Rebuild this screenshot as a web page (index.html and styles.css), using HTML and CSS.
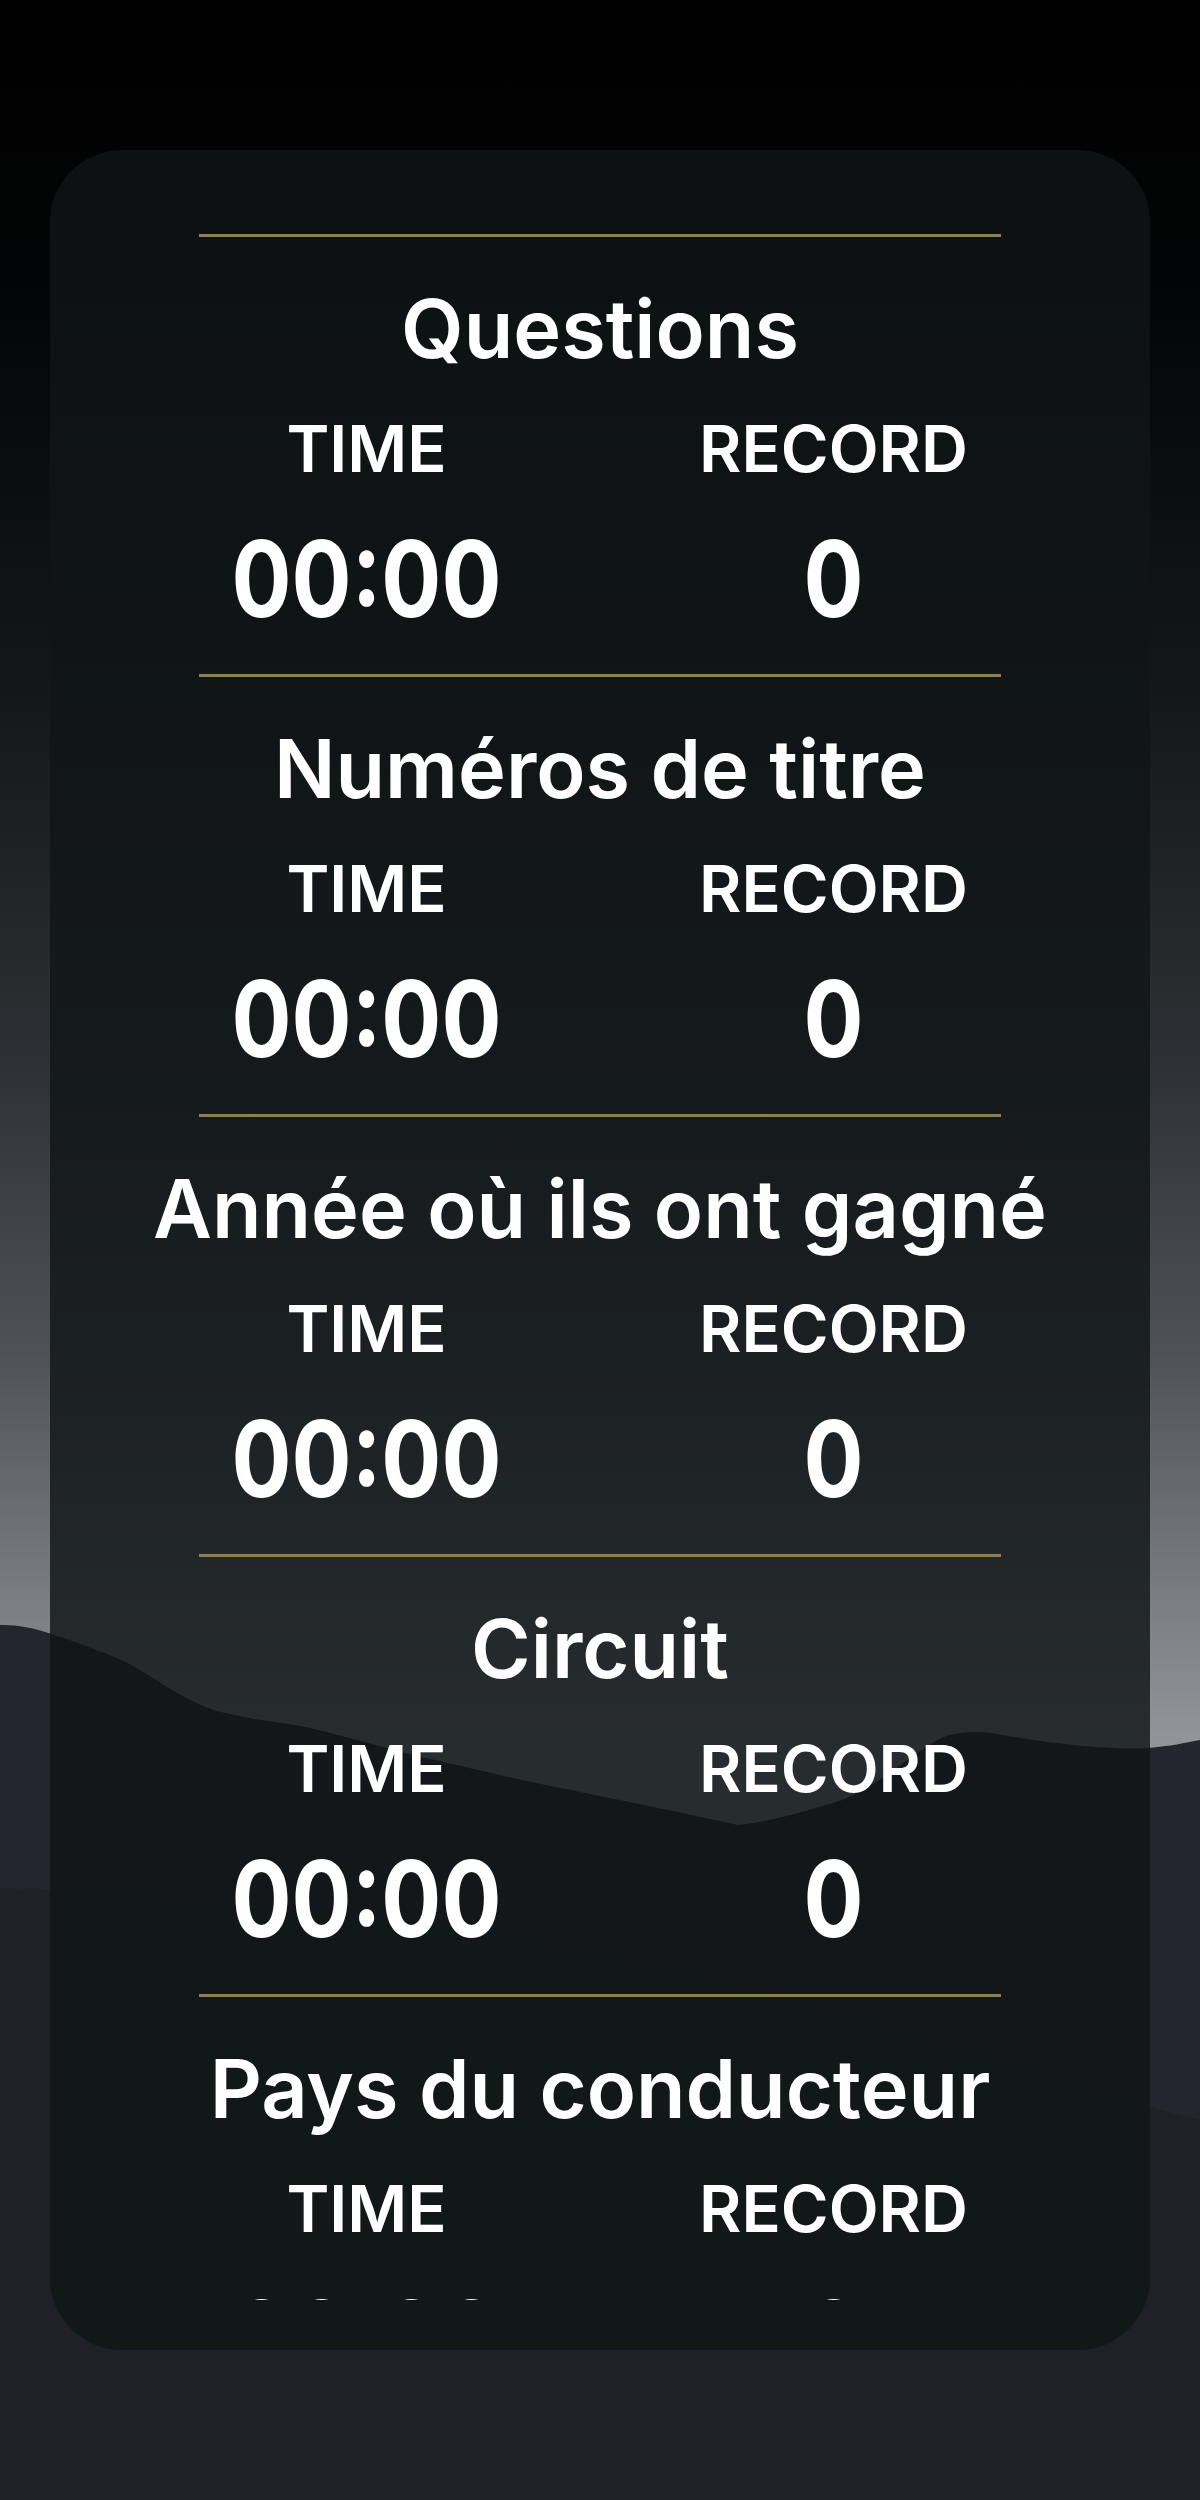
FILE: index.html
```html
<!DOCTYPE html>
<html lang="fr">
<head>
    <meta charset="UTF-8">
    <title>Records</title>
    <link rel="stylesheet" href="styles.css">
</head>
<body>
    <!-- décor: collines en arrière-plan -->
    <svg class="hills" viewBox="0 0 1200 2500" preserveAspectRatio="none">
        <path fill="#24262d" d="M0 1625 C 30 1624, 60 1636, 115 1657 C 150 1672, 170 1694, 214 1710 C 250 1720, 280 1722, 306 1727 C 360 1740, 400 1752, 421 1757 C 480 1770, 520 1780, 536 1783 C 600 1796, 680 1812, 738 1825 C 770 1822, 810 1810, 842 1800 C 890 1780, 920 1745, 949 1735 C 970 1730, 990 1732, 1002 1735 C 1060 1745, 1110 1750, 1148 1748 C 1170 1746, 1185 1743, 1200 1740 L 1200 2500 L 0 2500 Z"/>
        <path fill="#1f2126" d="M0 1888 C 200 1895, 420 1920, 640 1965 C 860 2010, 1040 2080, 1200 2120 L 1200 2500 L 0 2500 Z"/>
    </svg>

    <main class="card">
        <div class="scroller">
            <section class="block">
                <div class="rule"></div>
                <h2>Questions</h2>
                <div class="stats">
                    <span class="label">TIME</span>
                    <span class="label">RECORD</span>
                    <span class="value">00:00</span>
                    <span class="value">0</span>
                </div>
            </section>
            <section class="block">
                <div class="rule"></div>
                <h2>Numéros de titre</h2>
                <div class="stats">
                    <span class="label">TIME</span>
                    <span class="label">RECORD</span>
                    <span class="value">00:00</span>
                    <span class="value">0</span>
                </div>
            </section>
            <section class="block">
                <div class="rule"></div>
                <h2>Année où ils ont gagné</h2>
                <div class="stats">
                    <span class="label">TIME</span>
                    <span class="label">RECORD</span>
                    <span class="value">00:00</span>
                    <span class="value">0</span>
                </div>
            </section>
            <section class="block">
                <div class="rule"></div>
                <h2>Circuit</h2>
                <div class="stats">
                    <span class="label">TIME</span>
                    <span class="label">RECORD</span>
                    <span class="value">00:00</span>
                    <span class="value">0</span>
                </div>
            </section>
            <section class="block">
                <div class="rule"></div>
                <h2>Pays du conducteur</h2>
                <div class="stats">
                    <span class="label">TIME</span>
                    <span class="label">RECORD</span>
                    <span class="value">00:00</span>
                    <span class="value">0</span>
                </div>
            </section>
        </div>
    </main>
</body>
</html>
```

FILE: styles.css
```css
html, body {margin: 0; padding: 0}
body {
    position: relative;
    height: 2500px;
    overflow: hidden;
    padding-top: 150px;
    box-sizing: border-box;
    font-family: Inter, "Liberation Sans", sans-serif;
    color: #fff;
    background: linear-gradient(to bottom, #000 0, #040506 300px, #15171a 700px, #2c2f33 1050px, #4e5156 1350px, #7a7d82 1600px, #93959a 1745px);
}
.hills {position: absolute; left: 0; top: 0; width: 1200px; height: 2500px; z-index: 0}

.card {
    position: relative; z-index: 1;
    width: 1100px; height: 2200px; margin: 0 auto;
    padding: 50px 0; box-sizing: border-box;
    border-radius: 72px;
    background: rgba(16, 21, 22, 0.82);
}
.scroller {height: 2100px; overflow: hidden; padding-top: 34px; box-sizing: border-box}

.block {height: 440px; display: flex; flex-direction: column; align-items: center}
.rule {width: 802px; height: 3px; background: #8f7d57; flex-shrink: 0}
.block h2 {margin: 42px 0 0; font-size: 81px; line-height: 100px; font-weight: 600; white-space: nowrap}

.stats {width: 934px; display: grid; grid-template-columns: 1fr 1fr; text-align: center}
.label {margin-top: 30px; font-size: 65px; line-height: 80px; font-weight: 600}
.value {margin-top: 30px; font-size: 106px; line-height: 120px; font-weight: 700; transform: scaleX(0.84)}
```
